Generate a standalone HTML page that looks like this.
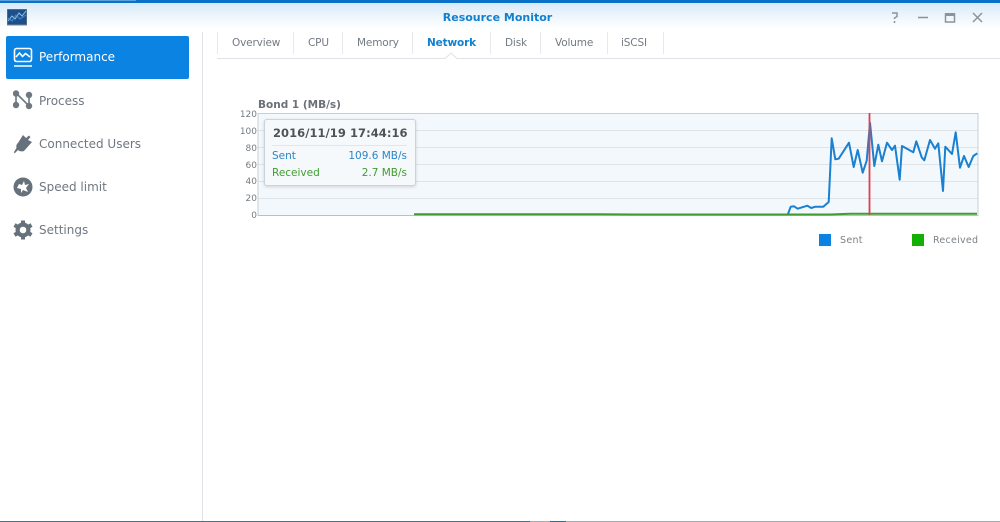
<!DOCTYPE html>
<html><head><meta charset="utf-8"><style>
html,body{margin:0;padding:0;background:#fff}
#p{position:relative;width:1000px;height:522px;overflow:hidden;background:#fff;font-family:"DejaVu Sans","Liberation Sans",sans-serif;color:#6b7580}
.a{position:absolute;white-space:nowrap}
.n{font-size:12px;line-height:16px;left:39px;color:#6f7780}
.t{font-size:10.5px;line-height:14px;top:36px;color:#727a82;letter-spacing:-.15px}
.s{position:absolute;top:32px;width:1px;height:22px;background:#e6e9ec}
.y{font-size:9px;line-height:10px;left:226px;width:31px;text-align:right;color:#757b80}
</style></head><body><div id="p">
<div class="a" style="left:0;top:0;width:1000px;height:30px;background:linear-gradient(#d8eaf9 3px,#f0f7fc 18px,#fff 30px)"></div>
<div class="a" style="left:0;top:0;width:1000px;height:3px;background:#0a70c8"></div>
<div class="a" style="left:0;top:0;width:136px;height:1px;background:#5aa0dc"></div>
<svg class="a" style="left:7px;top:9px" width="20" height="17" viewBox="0 0 20 17"><rect width="20" height="16" fill="#1d4f8c" stroke="#7b8794" stroke-width="1"/><path d="M1 12L5 7L8 10L12 4L15 7L19 2" stroke="#8fc6ea" fill="none"/><path d="M1 9L5 12L9 6L13 10L19 6" stroke="#4a8cc4" fill="none"/></svg>
<div class="a" style="left:0;width:995px;top:10px;text-align:center;font-size:11px;line-height:15px;font-weight:bold;color:#1180cf">Resource Monitor</div>
<svg class="a" style="left:885px;top:8px" width="100" height="18" viewBox="0 0 100 18" fill="none" stroke="#8a949d" stroke-width="1.5"><path d="M7 5H12V8.500L9.500 10V11"/><path d="M9.500 13V15"/><path d="M33 9.500H43"/><rect x="60.500" y="6" width="9" height="8"/><path d="M60 6.500H70" stroke-width="3"/><path d="M88 5L97 14M97 5L88 14"/></svg>

<div class="a" style="left:6px;top:36px;width:183px;height:43px;background:#0a83e2;border-radius:2px"></div>
<svg class="a" style="left:13px;top:47px" width="21" height="21" viewBox="0 0 21 21" fill="none" stroke="#fff" stroke-width="1.600"><rect x="1.500" y="1.500" width="17" height="13" rx="2"/><path d="M3 10L6.500 6L9.500 9.500L12.500 6.500L17 10"/><path d="M1 19H19"/></svg>
<div class="a n" style="top:49px;color:#fff">Performance</div>
<svg class="a" style="left:13px;top:90px" width="21" height="20" viewBox="0 0 21 20" fill="none" stroke="#6f7780" stroke-width="1.600"><path d="M3 3V15"/><path d="M3 3L16 16V5"/><circle cx="3" cy="3.500" r="2.400" fill="#6f7780"/><circle cx="3" cy="15" r="2.400" fill="#6f7780"/><circle cx="16" cy="5" r="2.400" fill="#6f7780"/><circle cx="16" cy="16" r="2.400" fill="#6f7780"/></svg>
<div class="a n" style="top:93px">Process</div>
<svg class="a" style="left:13px;top:133px" width="21" height="22" viewBox="0 0 21 22" fill="#66717b"><path d="M10 2L13 5L16 2.500L17.500 4L15 7L19 9L11 18C8 19 6 18 5 17L1.500 20.500L1 19L3.500 15C3 13 3.500 11 5 10Z"/></svg>
<div class="a n" style="top:136px">Connected Users</div>
<svg class="a" style="left:13px;top:177px" width="21" height="20" viewBox="0 0 21 20"><circle cx="10" cy="10" r="9.500" fill="#66717b"/><path d="M6 7L9 8L11 4L12 8L16 7L13 11L15 15L10 13L8 16L8 12L4 11Z" fill="#fff"/></svg>
<div class="a n" style="top:179px">Speed limit</div>
<svg class="a" style="left:13px;top:220px" width="21" height="20" viewBox="0 0 21 20"><path d="M10 .5V19.500M1.500 5L18.500 15M18.500 5L1.500 15" stroke="#66717b" stroke-width="4"/><circle cx="10" cy="10" r="7.500" fill="#66717b"/><circle cx="10" cy="10" r="3.300" fill="#fff"/></svg>
<div class="a n" style="top:222px">Settings</div>
<div class="a" style="left:202px;top:32px;width:1px;height:489px;background:#dfe2e6"></div>

<div class="s" style="left:217px"></div><div class="s" style="left:293px"></div><div class="s" style="left:342px"></div><div class="s" style="left:412px"></div><div class="s" style="left:490px"></div><div class="s" style="left:540px"></div><div class="s" style="left:607px"></div><div class="s" style="left:663px"></div>
<div class="a t" style="left:232px">Overview</div>
<div class="a t" style="left:308px">CPU</div>
<div class="a t" style="left:357px">Memory</div>
<div class="a t" style="left:427px;font-weight:bold;color:#1180cf">Network</div>
<div class="a t" style="left:505px">Disk</div>
<div class="a t" style="left:555px">Volume</div>
<div class="a t" style="left:621px">iSCSI</div>
<svg class="a" style="left:217px;top:52px" width="783" height="8"><path d="M0 6.500H228L234 1L240 6.500H783" fill="#fff" stroke="#dfe2e6"/></svg>

<div class="a" style="left:258px;top:98px;font-size:10.500px;line-height:14px;font-weight:bold;color:#6a7178">Bond 1 (MB/s)</div>
<div class="a y" style="top:110px">120</div><div class="a y" style="top:127px">100</div><div class="a y" style="top:144px">80</div><div class="a y" style="top:161px">60</div><div class="a y" style="top:177px">40</div><div class="a y" style="top:194px">20</div><div class="a y" style="top:211px">0</div>
<svg class="a" style="left:0;top:0" width="1000" height="522">
<rect x="258" y="113" width="720" height="102" fill="#f3f8fc"/>
<path d="M258 130.500H978M258 147.500H978M258 164.500H978M258 181.500H978M258 198.500H978" stroke="#dfe4e9"/>
<rect x="258" y="113.500" width="720" height="102" fill="none" stroke="#c9ced3"/>
<path d="M258 215.500H978" stroke="#b9bfc5"/>
<path d="M788 214L790.700 206.700L794 206.300L797.700 208.700L807.300 205.700L811.300 208L815.300 206.700L823.300 206.700L828.700 202L831.700 138.300L835.300 159.300L838.700 158.700L849 142.700L853.700 167L857.700 150L862.700 172.700L866.700 160.700L870 122.700L874.300 166L878.300 144.700L882 161.300L887 142.700L892 150L895 145.700L899.700 179.700L902 146L913.300 152.300L916.300 141.300L921.700 157.300L924.300 160.300L930 140L935 148.700L938.300 143.300L943 191L945.300 146.700L952 154L955.700 132.300L960 167.700L964 156L968.700 167L973.300 156L977.300 153.300" fill="none" stroke="#1a80d0" stroke-width="2" stroke-linejoin="round"/>
<path d="M414 214.300H600L640 214.500H830L850 213.800H870L900 213.700H977" fill="none" stroke="#3f9c2e" stroke-width="2"/>
<path d="M869.500 113V215" stroke="#e0404c" stroke-width="1.800"/>
</svg>
<div class="a" style="left:264px;top:119px;width:150px;height:65px;background:#f6f9fb;border:1px solid #ccd3d9;border-radius:3px;box-shadow:0 1px 3px rgba(0,0,0,.15)"></div>
<div class="a" style="left:273px;top:125px;font-size:11.500px;line-height:16px;font-weight:bold;color:#4d5359;letter-spacing:.05px">2016/11/19 17:44:16</div>
<div class="a" style="left:272px;top:145px;width:135px;height:1px;background:#e2e6ea"></div>
<div class="a" style="left:272px;top:149px;font-size:10.500px;line-height:14px;color:#2a85c8">Sent</div>
<div class="a" style="right:593px;top:149px;font-size:10.500px;line-height:14px;color:#2a85c8">109.6 MB/s</div>
<div class="a" style="left:272px;top:166px;font-size:10.500px;line-height:14px;color:#3f9c2e">Received</div>
<div class="a" style="right:593px;top:166px;font-size:10.500px;line-height:14px;color:#3f9c2e">2.7 MB/s</div>

<div class="a" style="left:819px;top:234px;width:12px;height:12px;background:#0a83e2"></div>
<div class="a" style="left:840px;top:234px;font-size:9.500px;line-height:13px;color:#7b8288;letter-spacing:.3px">Sent</div>
<div class="a" style="left:912px;top:234px;width:12px;height:12px;background:#12b000"></div>
<div class="a" style="left:933px;top:234px;font-size:9.500px;line-height:13px;color:#7b8288;letter-spacing:.25px">Received</div>

<div class="a" style="left:0;top:521px;width:530px;height:1px;background:#3f7596"></div>
<div class="a" style="left:530px;top:521px;width:470px;height:1px;background:#a8abae"></div>
<div class="a" style="left:550px;top:521px;width:16px;height:1px;background:#2f6f90"></div>
</div></body></html>
